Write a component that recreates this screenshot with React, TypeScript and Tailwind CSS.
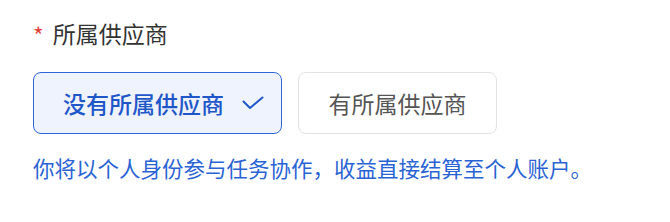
import React, { useState } from 'react'

const font = { fontFamily: '"Noto Sans CJK SC", "Noto Sans", sans-serif' }

const options = [
  { key: 'none', label: '没有所属供应商' },
  { key: 'has', label: '有所属供应商' },
]

const App: React.FC = () => {
  const [selected, setSelected] = useState('none')

  return (
    <div className="w-[670px] h-[222px] bg-white pl-[33px] pt-[16px]" style={font}>
      <div className="flex items-center h-[34px] text-[23px] text-[#333333]">
        <span className="text-[#e0463e] text-[23px] mr-[9px] mt-[5px]">*</span>
        所属供应商
      </div>

      <div className="flex gap-[16px] mt-[22px]">
        {options.map(({ key, label }) =>
          key === selected ? (
            <button
              key={key}
              onClick={() => setSelected(key)}
              className="h-[62px] w-[249px] flex items-center pl-[29px] gap-[18px] rounded-[8px] border-[1.5px] border-[#2f66d6] bg-[#eef3fe] text-[23px] font-medium text-[#1f57c9]"
            >
              {label}
              <svg width="22" height="14" viewBox="0 0 22 14" fill="none">
                <polyline
                  points="1.5,5.5 8,12 20.5,1.5"
                  stroke="#1f57c9"
                  strokeWidth="2"
                  strokeLinecap="round"
                  strokeLinejoin="round"
                />
              </svg>
            </button>
          ) : (
            <button
              key={key}
              onClick={() => setSelected(key)}
              className="h-[62px] w-[199px] flex items-center justify-center rounded-[8px] border-[1.5px] border-[#e2e2e2] bg-white text-[23px] text-[#555555]"
            >
              {label}
            </button>
          ),
        )}
      </div>

      <p className="mt-[18px] text-[21.5px] leading-[31px] text-[#2a63d4]">
        你将以个人身份参与任务协作，收益直接结算至个人账户。
      </p>
    </div>
  )
}

export default App
